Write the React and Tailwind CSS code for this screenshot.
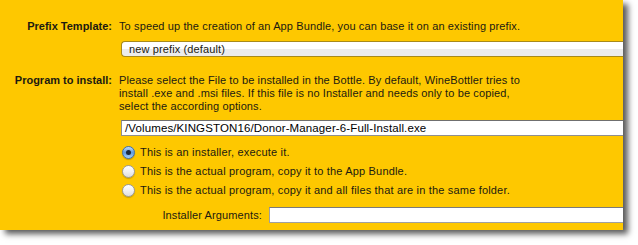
const RADIOS = [
  "This is an installer, execute it.",
  "This is the actual program, copy it to the App Bundle.",
  "This is the actual program, copy it and all files that are in the same folder.",
];

function Radio({ checked }) {
  if (checked) {
    return (
      <span className="flex h-[13px] w-[13px] items-center justify-center rounded-full border border-[#3d6fae] bg-gradient-to-b from-[#c3dcf7] via-[#5e9be0] to-[#a9d0f7] shadow-[0_1px_1px_rgba(0,0,0,0.25)]">
        <span className="h-[5px] w-[5px] rounded-full bg-[#1b2a3e]" />
      </span>
    );
  }
  return (
    <span className="h-[13px] w-[13px] rounded-full border border-[#9a9a9a] bg-gradient-to-b from-[#ffffff] via-[#f1f1f1] to-[#dedede] shadow-[0_1px_1px_rgba(0,0,0,0.2)]" />
  );
}

export default function App() {
  return (
    <div className="h-[245px] w-[638px] overflow-hidden bg-white font-['Liberation_Sans',Arial,sans-serif] text-[11px] leading-[13px] tracking-[0.12px] text-[#1c1a10]">
      <div className="flex h-[230px] w-[623px] flex-col bg-[#fec800] pt-[20px] shadow-[5px_4px_6px_rgba(0,0,0,0.65)]">
        {/* Prefix template */}
        <div className="flex">
          <div className="w-[112px] text-right font-bold tracking-normal">Prefix Template:</div>
          <div className="ml-[7px]">To speed up the creation of an App Bundle, you can base it on an existing prefix.</div>
        </div>
        <div className="ml-[121px] mt-[8px] flex h-[16px] items-center rounded-l-[4px] border-y border-l border-[#a88a1a] bg-gradient-to-b from-white from-50% to-[#ececec] to-50% pl-[7px]">
          new prefix (default)
        </div>

        {/* Program to install */}
        <div className="mt-[17px] flex">
          <div className="w-[112px] text-right font-bold tracking-normal">Program to install:</div>
          <div className="ml-[7px] w-[412px]">
            Please select the File to be installed in the Bottle. By default, WineBottler tries to install .exe and .msi files. If this file is no Installer and needs only to be copied, select the according options.
          </div>
        </div>
        <div className="ml-[121px] mt-[7px] flex h-[16px] items-center border border-r-0 border-[#8f8f8f] border-t-[#6f6f6f] bg-white pl-[3px] text-[11.5px] text-black">
          /Volumes/KINGSTON16/Donor-Manager-6-Full-Install.exe
        </div>

        <div className="ml-[122px] mt-[7px] flex flex-col tracking-[0.18px]">
          {RADIOS.map((label, i) => (
            <div key={label} className="flex h-[19px] items-center gap-[5px]">
              <Radio checked={i === 0} />
              <span>{label}</span>
            </div>
          ))}
        </div>

        <div className="ml-[119px] mt-[7px] flex items-center">
          <div className="w-[143px] text-right">Installer Arguments:</div>
          <div className="ml-[7px] h-[16px] flex-1 border border-r-0 border-[#a0a0a0] border-t-[#7a7a7a] bg-white" />
        </div>
      </div>
    </div>
  );
}
